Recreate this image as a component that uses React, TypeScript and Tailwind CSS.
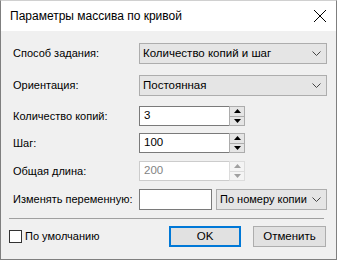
import React from "react";

const font = { fontFamily: '"Liberation Sans", Arial, sans-serif' };

function Chevron({ color = "#444" }: { color?: string }) {
  return (
    <svg width="9" height="5" viewBox="0 0 9 5" className="shrink-0">
      <path d="M0.5 0.5 L4.5 4.5 L8.5 0.5" fill="none" stroke={color} strokeWidth="1" />
    </svg>
  );
}

function Combo({ text, w, small = false }: { text: string; w: string; small?: boolean }) {
  return (
    <div className={`${w} h-full flex items-center justify-between bg-[#e5e5e5] border border-[#adadad] pl-[3px] pr-[5px]`}>
      <span className={`${small ? "text-[11px]" : "text-[11.5px]"} text-black leading-none whitespace-nowrap`}>{text}</span>
      <Chevron />
    </div>
  );
}

function Tri({ up, color }: { up: boolean; color: string }) {
  return (
    <svg width="7" height="4" viewBox="0 0 7 4">
      <path d={up ? "M0 4 L3.5 0 L7 4 Z" : "M0 0 L3.5 4 L7 0 Z"} fill={color} />
    </svg>
  );
}

function Spin({ value, disabled = false }: { value: string; disabled?: boolean }) {
  const border = disabled ? "border-[#cccccc]" : "border-[#7a7a7a]";
  const tri = disabled ? "#a0a0a0" : "#000000";
  return (
    <div className="flex h-full w-[106px]">
      <div className={`flex-1 h-full border ${border} border-r-0 bg-white flex items-center pl-[4px]`}>
        <span className={`text-[11.5px] leading-none ${disabled ? "text-[#838383]" : "text-black"}`}>{value}</span>
      </div>
      <div className={`w-[16px] h-full flex flex-col border ${disabled ? "border-[#dcdcdc]" : "border-[#acacac]"} bg-[#f0f0f0]`}>
        <div className={`flex-1 flex items-center justify-center ${disabled ? "bg-[#f4f4f4]" : "bg-[#e5e5e5]"} border-b ${disabled ? "border-[#dcdcdc]" : "border-[#acacac]"}`}>
          <Tri up color={tri} />
        </div>
        <div className={`flex-1 flex items-center justify-center ${disabled ? "bg-[#f4f4f4]" : "bg-[#e5e5e5]"}`}>
          <Tri up={false} color={tri} />
        </div>
      </div>
    </div>
  );
}

function Label({ children }: { children: React.ReactNode }) {
  return (
    <div className="w-[126px] shrink-0 text-[11px] leading-none whitespace-nowrap text-black">
      {children}
    </div>
  );
}

export default function App() {
  return (
    <div style={font} className="w-[337px] h-[260px] flex flex-col bg-[#f0f0f0] border-x border-b border-t border-t-[#d0d0d0] border-x-[#7f7f7f] border-b-[#7f7f7f] overflow-hidden">
      <div className="h-[30px] shrink-0 bg-white flex items-center justify-between pl-[9px] pr-[9px]">
        <span className="text-[12px] text-black leading-none whitespace-nowrap">Параметры массива по кривой</span>
        <svg width="14" height="14" viewBox="0 0 14 14">
          <path d="M1 1 L13 13 M13 1 L1 13" stroke="#000" strokeWidth="1" />
        </svg>
      </div>
      <div className="flex flex-col pl-[12px] pr-[9px]">
        <div className="mt-[12px] h-[21px] flex items-center">
          <Label>Способ задания:</Label>
          <Combo text="Количество копий и шаг" w="w-[188px]" />
        </div>
        <div className="mt-[11px] h-[21px] flex items-center">
          <Label>Ориентация:</Label>
          <Combo text="Постоянная" w="w-[188px]" />
        </div>
        <div className="mt-[10px] h-[20px] flex items-center">
          <Label>Количество копий:</Label>
          <Spin value="3" />
        </div>
        <div className="mt-[7px] h-[20px] flex items-center">
          <Label>Шаг:</Label>
          <Spin value="100" />
        </div>
        <div className="mt-[8px] h-[20px] flex items-center">
          <Label>Общая длина:</Label>
          <Spin value="200" disabled />
        </div>
        <div className="mt-[8px] h-[21px] flex items-center">
          <Label>Изменять переменную:</Label>
          <div className="w-[73px] h-full bg-white border border-[#7a7a7a]" />
          <div className="ml-[4px] h-full">
            <Combo text="По номеру копии" w="w-[111px]" small />
          </div>
        </div>
      </div>
      <div className="mt-[8px] ml-[8px] mr-[12px] h-px bg-[#a0a0a0]" />
      <div className="mt-[7px] h-[21px] flex items-center pl-[8px] pr-[10px]">
        <div className="w-[13px] h-[13px] border border-[#333333] bg-white" />
        <span className="ml-[3px] text-[11px] text-black leading-none whitespace-nowrap">По умолчанию</span>
        <div className="flex-1" />
        <div className="w-[72px] h-full border-2 border-[#0078d7] bg-[#e1e1e1] flex items-center justify-center text-[11.5px] text-black leading-none">
          OK
        </div>
        <div className="ml-[12px] w-[73px] h-full border border-[#adadad] bg-[#e1e1e1] flex items-center justify-center text-[11.5px] text-black leading-none">
          Отменить
        </div>
      </div>
    </div>
  );
}
